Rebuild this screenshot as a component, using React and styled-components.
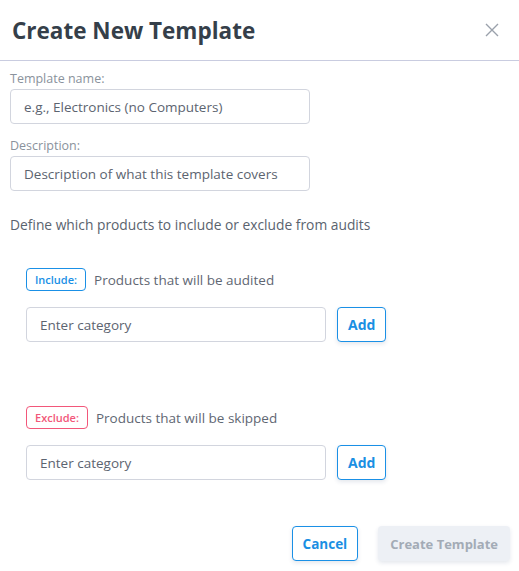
import styled, { createGlobalStyle } from "styled-components";

const GlobalStyle = createGlobalStyle`
  body {
    margin: 0;
    background: #fff;
    font-family: "Open Sans", "Liberation Sans", sans-serif;
  }
  * { box-sizing: border-box; }
`;

const Modal = styled.div`
  width: 519px;
  height: 571px;
  background: #fff;
  display: flex;
  flex-direction: column;
`;

const Header = styled.div`
  height: 61px;
  padding: 0 20px 0 12px;
  display: flex;
  align-items: center;
  justify-content: space-between;
  border-bottom: 1px solid #c9cce0;
`;

const Title = styled.h2`
  margin: 0;
  font-size: 22.5px;
  font-weight: 700;
  color: #353f4a;
`;

const CloseButton = styled.button`
  border: 0;
  background: none;
  padding: 0;
  width: 14px;
  height: 14px;
  display: flex;
  cursor: pointer;
`;

const Body = styled.div`
  padding: 10px 10px 0;
  display: flex;
  flex-direction: column;
`;

const Label = styled.label`
  font-size: 12.5px;
  line-height: 16px;
  color: #8a929c;
  margin-bottom: 2px;
`;

const TextInput = styled.input`
  width: ${(props) => props.$width || 300}px;
  height: 35px;
  border: 1px solid #d2d5de;
  border-radius: 4px;
  padding: 0 13px;
  font-family: inherit;
  font-size: 13.5px;
  color: #3a434e;
  outline: none;
  &::placeholder {
    color: #5c6470;
  }
`;

const Field = styled.div`
  display: flex;
  flex-direction: column;
  margin-bottom: ${(props) => props.$gap || 0}px;
`;

const Intro = styled.p`
  margin: 24px 0 0;
  font-size: 13.8px;
  line-height: 20px;
  color: #5a636e;
`;

const Section = styled.div`
  padding-left: 16px;
  margin-top: ${(props) => props.$top}px;
  display: flex;
  flex-direction: column;
  gap: 16px;
`;

const SectionHead = styled.div`
  display: flex;
  align-items: center;
  gap: 8px;
`;

const Badge = styled.span`
  height: 23px;
  padding: 0 8px;
  display: inline-flex;
  align-items: center;
  border: 1px solid ${(props) => props.$color};
  border-radius: 4px;
  font-size: 11px;
  font-weight: 600;
  color: ${(props) => props.$color};
`;

const Hint = styled.span`
  font-size: 13.5px;
  color: #5f6773;
`;

const AddRow = styled.div`
  display: flex;
  gap: 11px;
`;

const OutlineButton = styled.button`
  height: 35px;
  padding: 0 ${(props) => props.$pad || 10}px;
  border: 1px solid #1a90e6;
  border-radius: 4px;
  background: #fff;
  color: #1a8fe3;
  font-family: inherit;
  font-size: ${(props) => props.$size || 14}px;
  font-weight: 700;
  box-shadow: 0 2px 4px rgba(30, 60, 110, 0.12);
  cursor: pointer;
`;

const Footer = styled.div`
  margin-top: auto;
  padding: 0 9px 10px;
  display: flex;
  justify-content: flex-end;
  gap: 20px;
`;

const PrimaryButton = styled.button`
  height: 35px;
  padding: 0 12px;
  border: 0;
  border-radius: 4px;
  background: #edf0f5;
  color: #a3abb6;
  font-family: inherit;
  font-size: 13px;
  font-weight: 700;
  box-shadow: 0 2px 4px rgba(30, 60, 110, 0.12);
`;

const CategoryBlock = ({ kind, color, hint, top }) => (
  <Section $top={top}>
    <SectionHead>
      <Badge $color={color}>{kind}:</Badge>
      <Hint>{hint}</Hint>
    </SectionHead>
    <AddRow>
      <TextInput placeholder="Enter category" />
      <OutlineButton>Add</OutlineButton>
    </AddRow>
  </Section>
);

export default function App() {
  return (
    <>
      <GlobalStyle />
      <Modal>
        <Header>
          <Title>Create New Template</Title>
          <CloseButton aria-label="Close">
            <svg width="14" height="14" viewBox="0 0 14 14">
              <path d="M1 1L13 13M13 1L1 13" stroke="#9aa1ab" strokeWidth="1.4" />
            </svg>
          </CloseButton>
        </Header>
        <Body>
          <Field $gap={14}>
            <Label>Template name:</Label>
            <TextInput placeholder="e.g., Electronics (no Computers)" />
          </Field>
          <Field>
            <Label>Description:</Label>
            <TextInput placeholder="Description of what this template covers" />
          </Field>
          <Intro>Define which products to include or exclude from audits</Intro>
          <CategoryBlock
            kind="Include"
            color="#1a90e6"
            hint="Products that will be audited"
            top={33}
          />
          <CategoryBlock
            kind="Exclude"
            color="#f2577a"
            hint="Products that will be skipped"
            top={64}
          />
        </Body>
        <Footer>
          <OutlineButton $pad={10} $size={13.5}>Cancel</OutlineButton>
          <PrimaryButton>Create Template</PrimaryButton>
        </Footer>
      </Modal>
    </>
  );
}
